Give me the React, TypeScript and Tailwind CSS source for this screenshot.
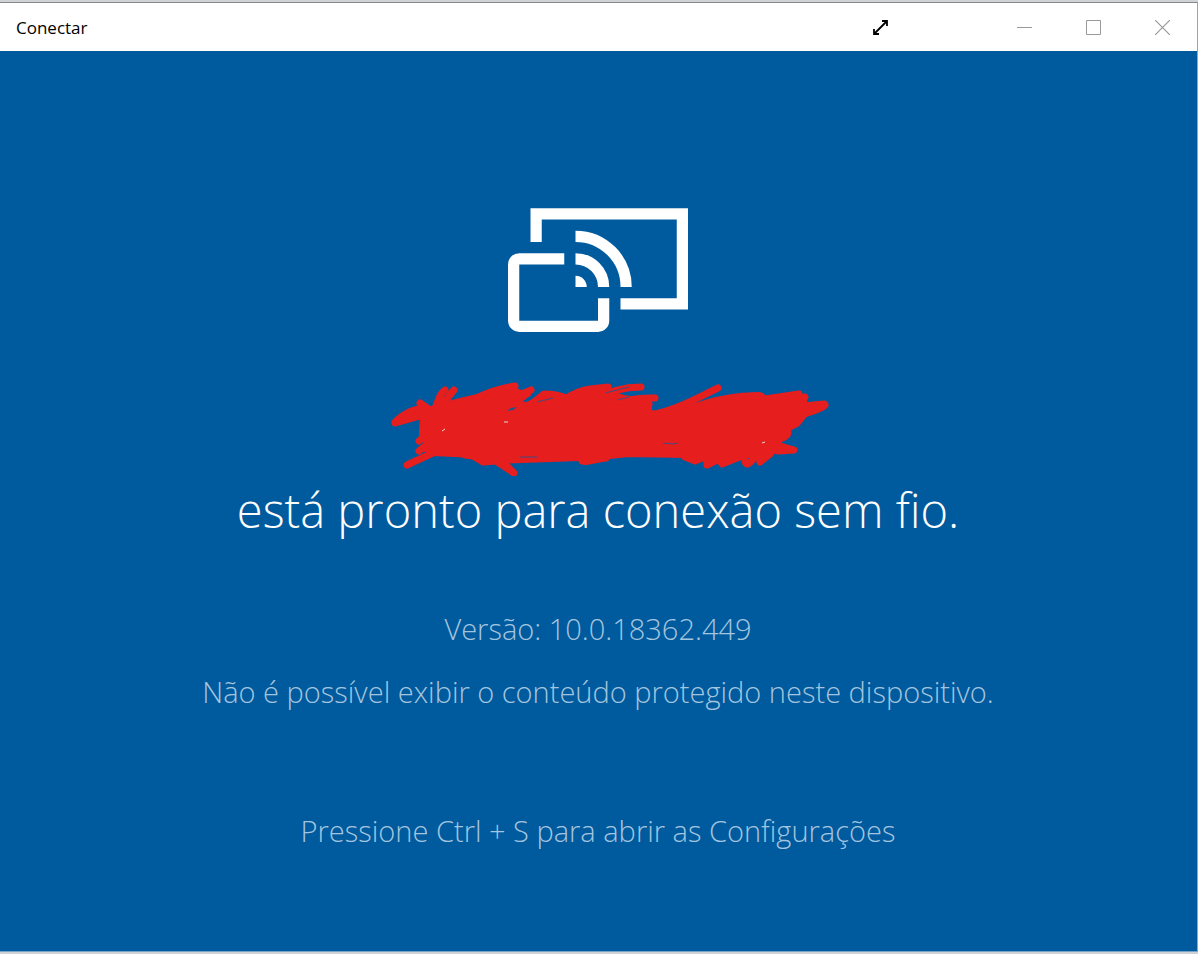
import type { ReactNode } from "react";

const messages = ["Versão: 10.0.18362.449", "Não é possível exibir o conteúdo protegido neste dispositivo."];

const WindowButton = ({ label, children }: { label: string; children: ReactNode }) => (
  <button type="button" aria-label={label} className="flex h-full w-[69px] items-center justify-center text-[#999999]">
    <svg width="15" height="15" viewBox="0 0 15 15" fill="none" stroke="currentColor">
      {children}
    </svg>
  </button>
);

const TitleBar = () => (
  <header className="flex h-12 items-center justify-between bg-white pl-4">
    <h1 className="pt-0.5 text-[17px] leading-6 text-black">Conectar</h1>
    <div className="flex h-full">
      <button type="button" aria-label="Tela inteira" className="mr-[75px] flex h-full w-[69px] items-center justify-center text-black">
        <svg width="15" height="15" viewBox="0 0 15 15" fill="none" stroke="currentColor" strokeWidth="1.8">
          <path d="M1 14 14 1M9 1h5v5M1 9v5h5" />
        </svg>
      </button>
      <WindowButton label="Minimizar">
        <path d="M0 7.5h15" />
      </WindowButton>
      <WindowButton label="Maximizar">
        <path d="M.5.5h14v14H.5z" />
      </WindowButton>
      <WindowButton label="Fechar">
        <path d="m0 0 15 15M15 0 0 15" strokeWidth="1.2" />
      </WindowButton>
    </div>
  </header>
);

const CastIcon = () => (
  <svg width="180" height="124" viewBox="0 0 16 11" fill="none" stroke="white" aria-hidden="true">
    <path d="M2.5 3V.5h13v8H10" />
    <path d="M5 4.5H1a.5.5 0 0 0-.5.5v5a.5.5 0 0 0 .5.5h7a.5.5 0 0 0 .5-.5V8" />
    <path d="M6 4.5A2.5 2.5 0 0 1 8.5 7M6 2.5A4.5 4.5 0 0 1 10.5 7" />
    <path d="M6 7V6a1 1 0 0 1 1 1z" fill="white" stroke="none" />
  </svg>
);

// Marker scribble over the device name
const Scribble = () => (
  <svg width="438" height="94" viewBox="392 382 438 94" className="ml-6" aria-hidden="true">
    <g stroke="#e71e1e" strokeLinecap="round" strokeLinejoin="round">
      <path
        strokeWidth="2"
        fill="#e71e1e"
        d="M423 408 432 407 445 403 461 399 478 395 492 391 515 388 524 392 531 395 521 402 528 403 545 394 564 398 588 390 608 391 625 396 652 400 652 411 665 412 700 403 740 395 760 393 768 397 800 394 807 400 808 415 800 425 786 432 780 446 774 453 757 457 741 457 724 462 709 461 687 457 630 456 600 459 580 460 497 463 478 457 433 455 424 450 428 443 421 440 421 432 422 416Z"
      />
      <g fill="none" strokeWidth="7">
        <path d="M396 423C406 420 416 417 428 414M396 422C406 413 414 409 426 408M421 403l13 9M435 411C439 401 441 393 446 390M438 411l17-21" />
        <path d="M408 465l28-13M420 441l14-13M420 451l12-10M466 455l8 1 10 6 13-1 18 12-14-14" />
        <path d="M480 397c12-6 24-9 36-11M500 404l32-14M530 406l15-12c10 0 16 1 24 5M565 400c8-6 18-10 26-11l18-2M595 400c15-9 32-13 47-13M605 404c18-3 35-7 51-6M615 411l35-7" />
        <path d="M660 413c22-5 40-16 59-25M702 405c16-6 40-10 60-9M766 399l34-5M780 404l26-7M795 407l30-3c4 1-3 5-20 10-4 5-11 7-14 11" />
        <path d="M583 461c6 2 12-2 24-3M686 457l10 4 12-5 0 9 12-6 3 5 20-8M746 453c-1 7 0 12 3 11 5-2 5-8 12-10M761 462l10-8 7-9 17 5-16 1M778 440c5-2 11-3 11-8-1-4-7 0-10 2" />
      </g>
    </g>
    <path d="M508 411l4-3 6-1-4 3z" fill="#175791" />
    <path d="M538 402l16-4M664 443l10 1 5-1M521 457h17M606 393l24-6M618 400l12-3" fill="none" stroke="#3f4d80" />
    <path d="M443 431l3-2M505 422h4M763 443l3-1" stroke="#dfd5dc" />
  </svg>
);

export default function App() {
  return (
    <div className="flex min-h-screen flex-col border-t-2 border-b-2 border-[#d0d3d6] bg-[#005a9e] font-['Open_Sans','Noto_Sans',sans-serif]">
      <div className="flex grow flex-col border-t border-r border-b border-t-[#858789] border-r-[#a3a3a3] border-b-[#77a5c9]">
        <TitleBar />
        <main className="flex grow flex-col items-center pt-[157px] pr-[33px] pb-12 pl-8 text-center font-light">
          <CastIcon />
          <div className="mt-[50px]">
            <Scribble />
          </div>
          <h2 className="mt-0.5 text-[47px] leading-[64px] text-white">está pronto para conexão sem fio.</h2>
          <div className="mt-[67px] flex flex-col gap-[23px] text-[29px] leading-10 text-[#a3c5df]">
            {messages.map((message) => (
              <p key={message}>{message}</p>
            ))}
          </div>
          <p className="mt-[99px] text-[29px] leading-10 text-[#a3c5df]">Pressione Ctrl + S para abrir as Configurações</p>
        </main>
      </div>
    </div>
  );
}
